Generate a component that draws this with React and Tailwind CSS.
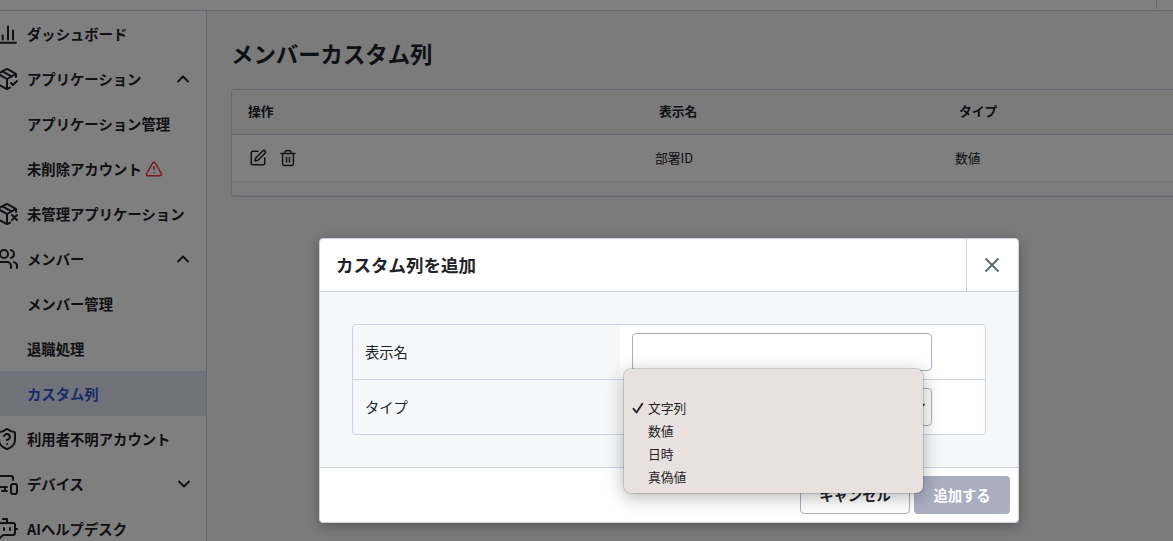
import React from 'react';
import {
  BotMessageSquare,
  ChevronDown,
  ChevronUp,
  MonitorSmartphone,
  PackageCheck,
  PackageX,
  ShieldQuestion,
  SquarePen,
  TriangleAlert,
  Users,
} from 'lucide-react';

const ChartIcon = () => (
  <svg className="w-6 h-6" viewBox="0 0 24 24" fill="none" stroke="currentColor" strokeWidth="2" strokeLinecap="round">
    <path d="M3 20.8h18M7.7 13.5v4M13 4.5v13M18 8.5v9" />
  </svg>
);

const TrashIcon = () => (
  <svg className="w-[18px] h-[18px]" viewBox="0 0 18 18" fill="none" stroke="currentColor" strokeWidth="1.5" strokeLinecap="round" strokeLinejoin="round">
    <path d="M2 4.5h14M3.6 4.5v10.3c0 .9.7 1.6 1.6 1.6h7.6c.9 0 1.6-.7 1.6-1.6V4.5M5.9 4.5V3c0-.7.5-1.2 1.2-1.2h3.8c.7 0 1.2.5 1.2 1.2v1.5M7.5 8.2v4.8M10.5 8.2v4.8" />
  </svg>
);

const iconProps = { className: 'w-6 h-6', strokeWidth: 2 };

const menu = [
  { label: 'ダッシュボード', icon: <ChartIcon /> },
  { label: 'アプリケーション', icon: <PackageCheck {...iconProps} />, chevron: 'up' },
  { label: 'アプリケーション管理' },
  { label: '未削除アカウント', alert: true },
  { label: '未管理アプリケーション', icon: <PackageX {...iconProps} /> },
  { label: 'メンバー', icon: <Users {...iconProps} />, chevron: 'up' },
  { label: 'メンバー管理' },
  { label: '退職処理' },
  { label: 'カスタム列', active: true },
  { label: '利用者不明アカウント', icon: <ShieldQuestion {...iconProps} /> },
  { label: 'デバイス', icon: <MonitorSmartphone {...iconProps} />, chevron: 'down' },
  { label: 'AIヘルプデスク', icon: <BotMessageSquare {...iconProps} /> },
];

const options = ['文字列', '数値', '日時', '真偽値'];

const Sidebar = () => (
  <nav className="w-[207px] shrink-0 border-r border-[#cdd1e6] bg-white overflow-hidden">
    {menu.map((item) => (
      <div
        key={item.label}
        className={`flex items-center h-[45px] pr-[13px] text-[14.35px] font-semibold whitespace-nowrap ${
          item.active ? 'bg-[#e3e7f5] text-[#3255d4]' : 'text-[#1f2329]'
        }`}
      >
        <div className="w-6 h-6 -ml-[5px] mr-2 shrink-0">{item.icon}</div>
        <span>{item.label}</span>
        {item.alert && <TriangleAlert className="w-[18px] h-[18px] ml-[3px] text-[#f0323b]" strokeWidth={2} />}
        {item.chevron === 'up' && <ChevronUp className="w-5 h-5 ml-auto" strokeWidth={2.2} />}
        {item.chevron === 'down' && <ChevronDown className="w-5 h-5 ml-auto -mr-px" strokeWidth={2.2} />}
      </div>
    ))}
  </nav>
);

const MemberTable = () => (
  <div className="w-[1000px] h-[108px] rounded-[4px] border border-[#cdd1e6] bg-[#fafafa] text-[12.8px]">
    <div className="grid grid-cols-[411px_300px_1fr] items-center h-[45px] pl-4 pb-0.5 border-b border-[#cdd1e6] bg-[#f7f7f7] font-semibold">
      <div>操作</div>
      <div>表示名</div>
      <div>タイプ</div>
    </div>
    <div className="grid grid-cols-[407px_300px_1fr] items-center h-[47px] pl-4 border-b border-[#e2e3e8] bg-white">
      <div className="flex gap-3 pl-px">
        <SquarePen className="w-[18px] h-[18px]" strokeWidth={2} />
        <TrashIcon />
      </div>
      <div>部署ID</div>
      <div>数値</div>
    </div>
    <div className="h-[14px] border-b border-[#e6e6ea]"></div>
  </div>
);

const AddColumnDialog = () => (
  <div className="w-[700px] h-[285px] flex flex-col rounded-[4px] border border-[#cdd2e3] bg-white shadow-[0_3px_12px_rgba(0,0,0,0.3)]">
    <div className="flex h-[53px] border-b border-[#cdd2e3]">
      <h2 className="flex-1 flex items-center pl-4 text-[17.5px] font-semibold">カスタム列を追加</h2>
      <button className="w-[52px] flex items-center justify-center pr-0.5 border-l border-[#cdd2e3] text-[#5a6475]">
        <svg className="w-4 h-4" viewBox="0 0 16 16" fill="none" stroke="currentColor" strokeWidth="1.8">
          <path d="M1.5 1.5l13 13M14.5 1.5l-13 13" />
        </svg>
      </button>
    </div>

    <div className="flex-1 px-8 pt-8 bg-[#f5f7f9]">
      <div className="relative h-[111px] rounded-[4px] border border-[#cdd2e6] text-[14.3px]">
        <div className="flex h-[55px] border-b border-[#cdd2e6]">
          <label className="w-[267px] flex items-center pl-3">表示名</label>
          <div className="flex-1 flex items-center pl-3 bg-white rounded-tr-[3px]">
            <input className="w-[300px] h-[38px] rounded-[4px] border border-[#a9adc2] bg-white" />
          </div>
        </div>
        <div className="flex h-[54px]">
          <label className="w-[267px] flex items-center pl-3">タイプ</label>
          <div className="flex-1 flex items-center pl-3 bg-white rounded-br-[3px]">
            <div className="w-[300px] h-[38px] flex items-center justify-end pr-0.5 rounded-[4px] border border-[#a9adc2]">
              <ChevronDown className="w-5 h-5" strokeWidth={2} />
            </div>
          </div>
        </div>

        {/* Open select menu */}
        <ul className="absolute left-[271px] top-[44px] z-10 w-[299px] h-[124px] pt-[27px] rounded-[7px] bg-[#e9e1df] text-[12.8px] shadow-[0_0_0_1px_rgba(0,0,0,0.14),0_4px_18px_rgba(0,0,0,0.3)]">
          {options.map((option, index) => (
            <li key={option} className="flex items-center h-[23px] pl-2">
              <span className="w-4 flex items-center">
                {index === 0 && (
                  <svg className="w-3 h-3" viewBox="0 0 12 12" fill="none" stroke="currentColor" strokeWidth="1.9" strokeLinecap="round" strokeLinejoin="round">
                    <path d="M1.5 6.8l3 3.7L10.3 1.8" />
                  </svg>
                )}
              </span>
              {option}
            </li>
          ))}
        </ul>
      </div>
    </div>

    <div className="flex items-center justify-end gap-1 h-[55px] pr-2 border-t border-[#cdd2e3] text-[14.3px] font-semibold">
      <button className="w-[110px] h-[38px] rounded-[4px] border border-[#a9adc2] bg-white">キャンセル</button>
      <button className="w-[96px] h-[38px] rounded-[4px] bg-[#aaafc0] text-white">追加する</button>
    </div>
  </div>
);

const App = () => (
  <div className="relative w-full h-screen overflow-hidden flex flex-col bg-white text-[#1f2329] font-['Noto_Sans_CJK_JP',sans-serif]">
    <header className="h-[11px] shrink-0 flex justify-end pr-4 pb-px border-b border-[#cdd1e6]">
      <div className="w-px bg-[#cdd1e6]"></div>
    </header>
    <div className="flex-1 min-h-0 flex">
      <Sidebar />
      <main className="flex-1 min-w-0 overflow-hidden pl-6 pt-[26px] bg-[#f6f6f6]">
        <h1 className="mb-5 text-[22.4px] leading-8 font-semibold">メンバーカスタム列</h1>
        <MemberTable />
      </main>
    </div>

    {/* Modal backdrop */}
    <div className="absolute inset-0 flex items-start pl-[319px] pt-[238px] bg-black/50">
      <AddColumnDialog />
    </div>
  </div>
);

export default App;
